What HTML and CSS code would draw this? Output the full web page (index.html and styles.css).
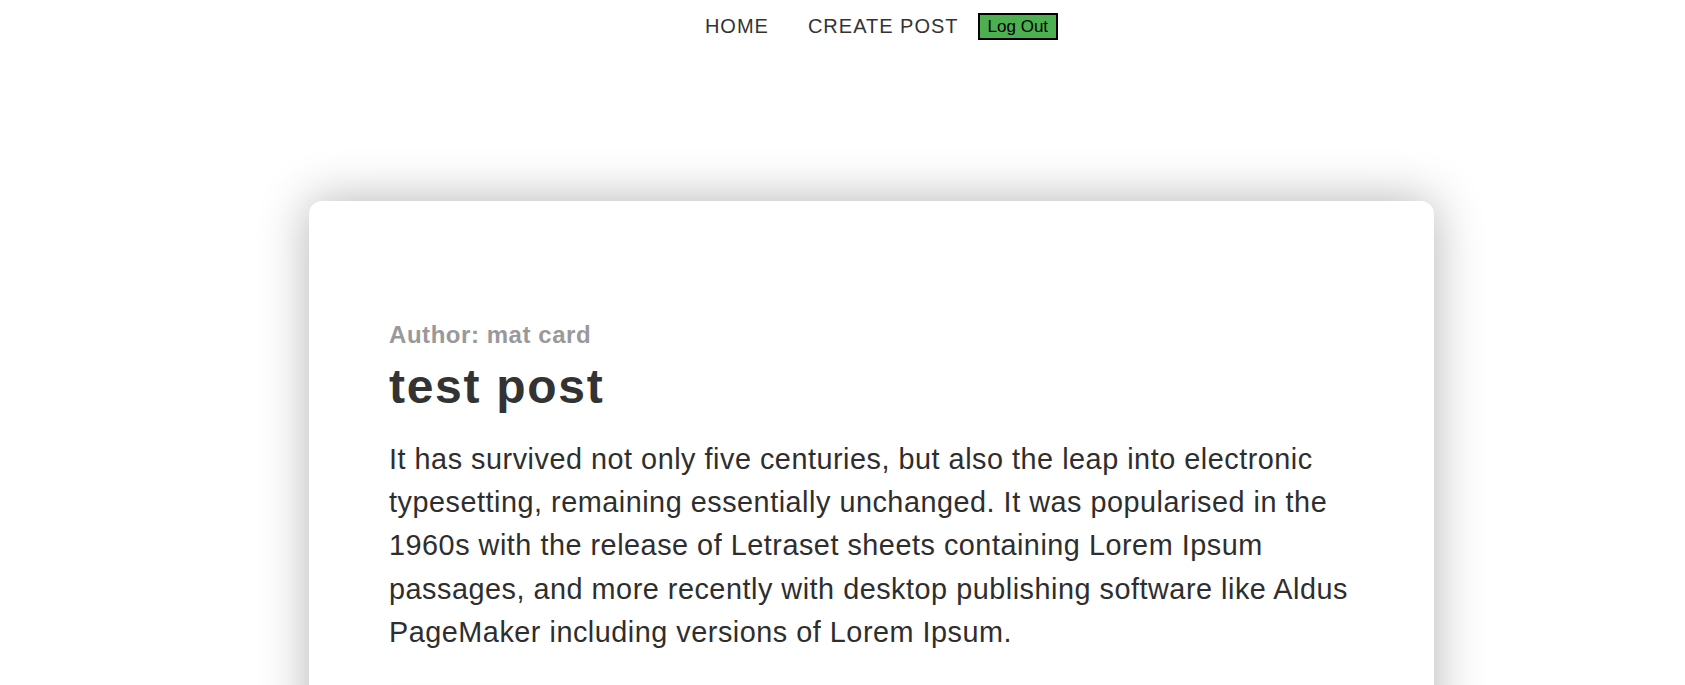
FILE: index.html
```html
<!DOCTYPE html>
<html lang="en">
<head>
<meta charset="utf-8">
<title>test post</title>
<link rel="stylesheet" href="styles.css">
</head>
<body>
<div class="page">
  <nav class="nav">
    <a class="nav-link" href="#">HOME</a>
    <a class="nav-link" href="#">CREATE POST</a>
    <button class="logout">Log Out</button>
  </nav>
  <main class="main">
    <article class="card">
      <h3 class="author">Author: mat card</h3>
      <h1 class="title">test post</h1>
      <p class="body">It has survived not only five centuries, but also the leap into electronic typesetting, remaining essentially unchanged. It was popularised in the 1960s with the release of Letraset sheets containing Lorem Ipsum passages, and more recently with desktop publishing software like Aldus PageMaker including versions of Lorem Ipsum.</p>
      <div class="actions">
        <button class="action" aria-label="Delete post"></button>
      </div>
    </article>
  </main>
</div>
</body>
</html>
```

FILE: styles.css
```css
html, body {
  margin: 0;
  padding: 0;
  background: #ffffff;
}

body {
  font-family: "Liberation Sans", Arial, sans-serif;
  color: #333333;
}

.page {
  padding-left: 58px;
}

.nav {
  display: flex;
  justify-content: center;
  align-items: center;
  padding: 13px 0;
}

.nav-link {
  font-size: 20px;
  letter-spacing: 1px;
  color: #333333;
  text-decoration: none;
  padding: 0 19px 0 20px;
}

.logout {
  font-family: "Liberation Sans", Arial, sans-serif;
  font-size: 17px;
  line-height: 19px;
  color: #000000;
  background: #4caf50;
  border: 2px solid #000000;
  padding: 2px 8px;
  margin: 0;
  cursor: pointer;
}

.main {
  display: flex;
  justify-content: center;
  padding-top: 148px;
}

.card {
  width: 1125px;
  box-sizing: border-box;
  background: #ffffff;
  border-radius: 13px;
  box-shadow: 0 0 50px rgba(0, 0, 0, 0.3);
  padding: 120px 80px 80px;
}

.author {
  margin: 0;
  font-size: 24px;
  font-weight: bold;
  letter-spacing: 0.55px;
  color: #999999;
}

.title {
  margin: 10px 0 0;
  font-size: 48px;
  font-weight: bold;
  letter-spacing: 1.7px;
  color: #333333;
}

.body {
  margin: 24px 0 0;
  font-size: 28.8px;
  line-height: 1.5;
  letter-spacing: 0.52px;
  color: #2e2e2e;
}

.actions {
  margin-top: 37px;
  display: flex;
}

.action {
  width: 137px;
  height: 48px;
  border: none;
  border-radius: 10px;
  background: #ffffff;
  box-shadow: 0 0 12px rgba(0, 0, 0, 0.08);
  padding: 0;
}
```
